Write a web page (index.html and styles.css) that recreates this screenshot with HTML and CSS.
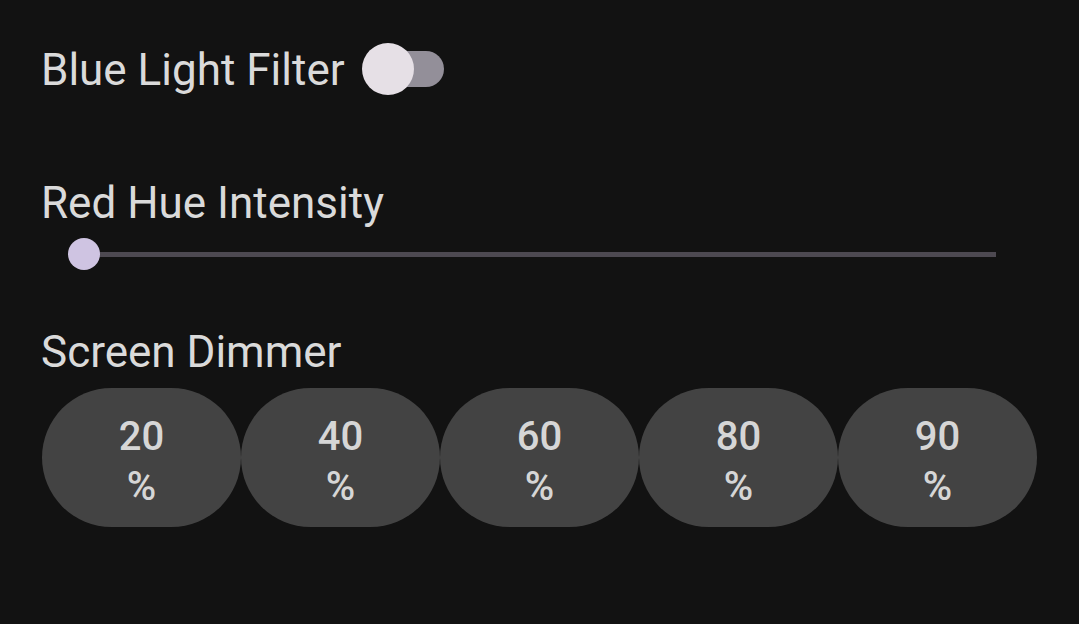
FILE: index.html
```html
<!DOCTYPE html>
<html>
<head>
<meta charset="utf-8">
<link rel="stylesheet" href="styles.css">
</head>
<body>
<div class="page">
  <div class="row-switch">
    <span class="label">Blue Light Filter</span>
    <div class="switch"><div class="track"></div><div class="thumb"></div></div>
  </div>
  <div class="label red-label">Red Hue Intensity</div>
  <div class="slider"><div class="s-track"></div><div class="s-thumb"></div></div>
  <div class="label dim-label">Screen Dimmer</div>
  <div class="buttons">
    <div class="btn"><span>20</span><span>%</span></div>
    <div class="btn"><span>40</span><span>%</span></div>
    <div class="btn"><span>60</span><span>%</span></div>
    <div class="btn"><span>80</span><span>%</span></div>
    <div class="btn"><span>90</span><span>%</span></div>
  </div>
</div>
</body>
</html>
```
FILE: styles.css
```css
html, body {
  margin: 0;
  padding: 0;
  background: #121212;
  width: 1079px;
  height: 624px;
  overflow: hidden;
}
.page {
  padding: 44px 0 0 41px;
  font-family: Roboto, "Noto Sans", sans-serif;
  color: #dadada;
}
.label {
  font-size: 44px;
  line-height: 52px;
  height: 52px;
  white-space: nowrap;
}
.row-switch {
  display: flex;
  align-items: center;
  height: 52px;
  gap: 17px;
}
.switch {
  position: relative;
  width: 84px;
  height: 52px;
  margin-top: -3px;
}
.track {
  position: absolute;
  left: 16px;
  top: 8px;
  width: 66px;
  height: 36px;
  border-radius: 18px;
  background: #938f99;
}
.thumb {
  position: absolute;
  left: 0;
  top: 0;
  width: 52px;
  height: 52px;
  border-radius: 50%;
  background: #e6e0e6;
}
.red-label {
  margin-top: 81px;
}
.slider {
  position: relative;
  margin: 9px 0 0 27px;
  width: 928px;
  height: 32px;
}
.s-track {
  position: absolute;
  left: 16px;
  right: 0;
  top: 14px;
  height: 5px;
  background: #4d4951;
}
.s-thumb {
  position: absolute;
  left: 0;
  top: 0;
  width: 32px;
  height: 32px;
  border-radius: 50%;
  background: #cfc4e2;
}
.dim-label {
  margin-top: 56px;
}
.buttons {
  display: flex;
  margin: 10px 0 0 1px;
}
.btn {
  width: 199px;
  height: 139px;
  border-radius: 70px;
  background: #434343;
  display: flex;
  flex-direction: column;
  align-items: center;
  justify-content: center;
  font-size: 40px;
  font-weight: 500;
  line-height: 50px;
  color: #d6d6d6;
  padding-top: 8px;
  box-sizing: border-box;
}
```
